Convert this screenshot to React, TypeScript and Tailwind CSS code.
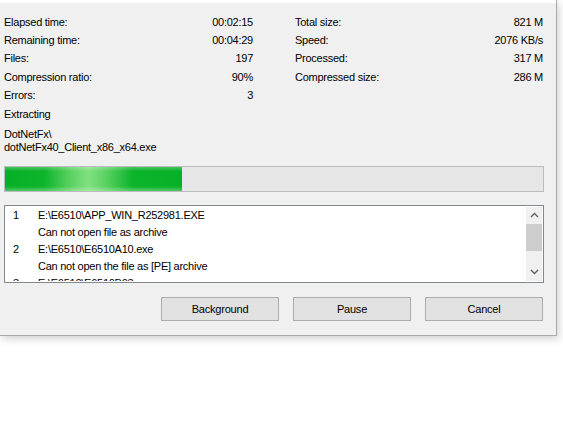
import React from 'react';

const font = { fontFamily: '"Liberation Sans", Arial, sans-serif' };

const stats = [
  ['Elapsed time:', '00:02:15', 'Total size:', '821 M'],
  ['Remaining time:', '00:04:29', 'Speed:', '2076 KB/s'],
  ['Files:', '197', 'Processed:', '317 M'],
  ['Compression ratio:', '90%', 'Compressed size:', '286 M'],
  ['Errors:', '3', '', ''],
];

const messages: [string, string][] = [
  ['1', 'E:\\E6510\\APP_WIN_R252981.EXE'],
  ['', 'Can not open file as archive'],
  ['2', 'E:\\E6510\\E6510A10.exe'],
  ['', 'Can not open the file as [PE] archive'],
  ['3', 'E:\\E6510\\E6510B03.exe'],
];

const Chevron: React.FC<{ up?: boolean }> = ({ up }) => (
  <svg width="9" height="6" viewBox="0 0 9 6">
    <path
      d={up ? 'M1 5 L4.5 1.5 L8 5' : 'M1 1 L4.5 4.5 L8 1'}
      fill="none"
      stroke="#606060"
      strokeWidth="1.4"
    />
  </svg>
);

const WinButton: React.FC<{ label: string }> = ({ label }) => (
  <button
    type="button"
    className="w-[118px] h-[24px] bg-[#e1e1e1] border border-[#adadad] text-[11px] text-black tracking-[-0.2px]"
  >
    {label}
  </button>
);

export default function App() {
  return (
    <div className="w-[563px] h-[434px] bg-white overflow-hidden" style={font}>
      <div className="w-[557px] h-[336px] bg-[#f0f0f0] border-r border-b border-[#a9a9a9] shadow-[2px_3px_8px_rgba(0,0,0,0.18)] flex flex-col">
        <div className="h-[3px] bg-white shrink-0" />
        <div className="flex flex-col pl-[4px] pr-[12px] pt-[10px] text-[11px] text-black tracking-[-0.25px]">
          <div className="flex flex-col">
            {stats.map(([l1, v1, l2, v2]) => (
              <div key={l1} className="flex h-[18.3px] items-center">
                <div className="w-[249px] flex justify-between">
                  <span>{l1}</span>
                  <span>{v1}</span>
                </div>
                <div className="w-[248px] ml-[42px] flex justify-between">
                  <span>{l2}</span>
                  <span>{v2}</span>
                </div>
              </div>
            ))}
          </div>
          <div className="h-[19px] flex items-center mt-[0.5px]">Extracting</div>
          <div className="mt-[4px] leading-[13px]">
            <div>DotNetFx\</div>
            <div>dotNetFx40_Client_x86_x64.exe</div>
          </div>

          <div className="mt-[12px] h-[26px] w-[540px] border border-[#bcbcbc] bg-[#e6e6e6] flex">
            <div className="w-[177px] h-full bg-[linear-gradient(180deg,rgba(255,255,255,0.25)_0%,rgba(255,255,255,0)_18%,rgba(255,255,255,0)_80%,rgba(255,255,255,0.3)_100%),linear-gradient(90deg,#06b025_0%,#0cb42c_22%,#5fd365_38%,#80e080_47%,#5fd365_56%,#0cb42c_72%,#06b025_100%)]" />
          </div>

          <div className="mt-[13px] h-[78px] w-[540px] border border-[#828790] bg-white p-[1px] flex">
            <div className="flex-1 overflow-hidden flex flex-col pl-[7px]">
              {messages.map(([n, t], i) => (
                <div key={i} className="flex h-[17px] shrink-0 items-center">
                  <span className="w-[25px]">{n}</span>
                  <span>{t}</span>
                </div>
              ))}
            </div>
            <div className="w-[16px] bg-[#f0f0f0] flex flex-col items-center">
              <div className="h-[17px] flex items-center justify-center">
                <Chevron up />
              </div>
              <div className="w-full h-[27px] bg-[#cdcdcd]" />
              <div className="flex-1" />
              <div className="h-[17px] flex items-center justify-center">
                <Chevron />
              </div>
            </div>
          </div>

          <div className="mt-[14px] flex justify-end gap-[14px] pr-[1px]">
            <WinButton label="Background" />
            <WinButton label="Pause" />
            <WinButton label="Cancel" />
          </div>
        </div>
      </div>
    </div>
  );
}
